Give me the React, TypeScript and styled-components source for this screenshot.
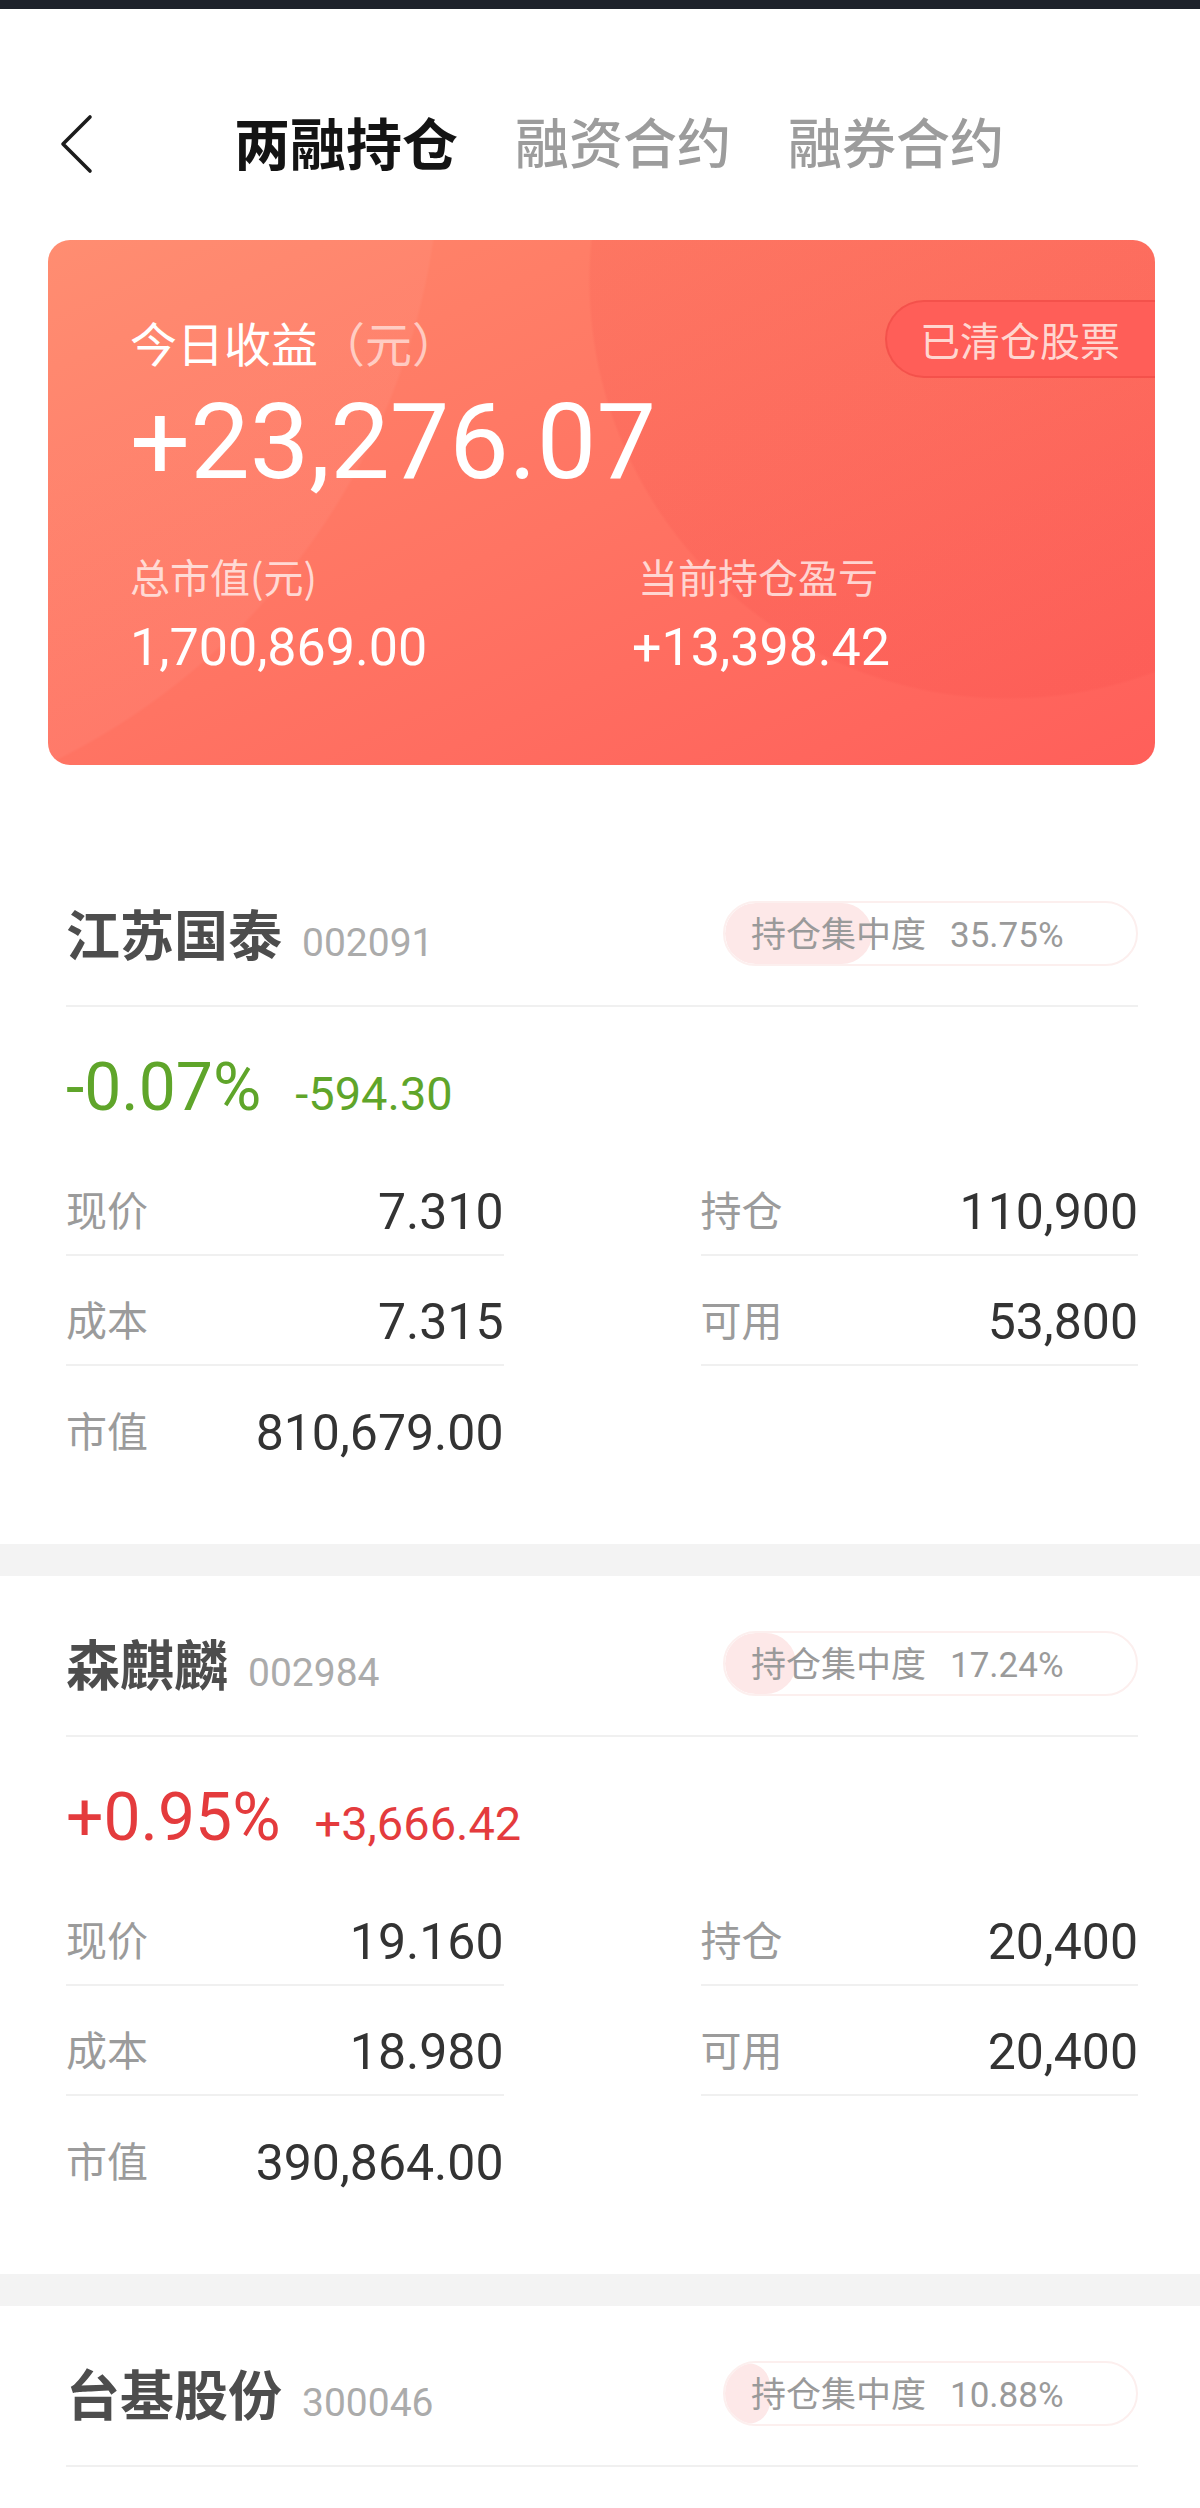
import styled, { createGlobalStyle } from "styled-components";

const NUM_FONT = `Roboto, "Noto Sans CJK SC", sans-serif`

const GlobalStyle = createGlobalStyle`
    html, body {
        margin: 0;
        padding: 0;
        background: #ffffff;
    }
    body {
        font-family: "Noto Sans CJK SC", "Noto Sans", sans-serif;
    }
    * {
        box-sizing: border-box;
    }
`

const Page = styled.div`
    width: 1200px;
    min-height: 2508px;
    background: #ffffff;
`

const StatusBar = styled.div`
    height: 9px;
    background: #1e222b;
`

const TopArea = styled.header`
    padding: 72px 0 39px;
`

const NavBar = styled.nav`
    height: 120px;
    display: flex;
    align-items: center;
    padding-left: 58px;
`

const BackButton = styled.button`
    width: 40px;
    height: 64px;
    margin-top: 6px;
    padding: 0;
    border: 0;
    background: none;
    display: flex;
    align-items: center;
    justify-content: center;
`

const Tabs = styled.div`
    display: flex;
    align-items: center;
    gap: 57px;
    margin-left: 136px;
`

const Tab = styled.div<{ $active?: boolean }>`
    font-size: ${props => props.$active ? "56px" : "54px"};
    line-height: 64px;
    font-weight: ${props => props.$active ? 700 : 500};
    color: ${props => props.$active ? "#141414" : "#9c9c9c"};
`

const SummaryCard = styled.section`
    height: 525px;
    margin: 0 45px 0 48px;
    padding: 60px 0 0 82px;
    border-radius: 22px;
    overflow: hidden;
    color: #ffffff;
    background:
        radial-gradient(circle 420px at 960px 40px, rgba(240, 60, 60, 0.12) 417px, transparent 420px),
        radial-gradient(circle 694px at -300px -100px, rgba(255, 255, 255, 0.045) 691px, transparent 694px),
        linear-gradient(155deg, #ff886b 0%, #ff7463 50%, #ff5f5a 100%);
`

const CardTop = styled.div`
    height: 78px;
    display: flex;
    align-items: center;
    justify-content: space-between;
`

const TodayLabel = styled.div`
    margin-top: 6px;
    font-size: 47px;
    line-height: 56px;
`

const Unit = styled.span`
    color: rgba(255, 255, 255, 0.6);
`

const ClearedButton = styled.button`
    height: 78px;
    padding: 0 35px 0 33px;
    border: 2px solid rgba(222, 58, 54, 0.35);
    border-right: 0;
    border-radius: 39px 0 0 39px;
    background: #ff5e58;
    color: rgba(255, 222, 216, 0.95);
    font-family: inherit;
    font-size: 40px;
    line-height: 56px;
`

const BigNumber = styled.div`
    margin-top: 8px;
    font-family: ${NUM_FONT};
    font-size: 106px;
    line-height: 112px;
`

const Stats = styled.div`
    margin-top: 50px;
    display: grid;
    grid-template-columns: 502px 1fr;
`

const StatLabel = styled.div<{ $indent?: boolean }>`
    padding-left: ${props => props.$indent ? "6px" : "0"};
    font-size: 40px;
    line-height: 56px;
    color: rgba(255, 255, 255, 0.72);
`

const StatValue = styled.div`
    margin-top: 14px;
    font-family: ${NUM_FONT};
    font-size: 52px;
    line-height: 60px;
`

const StockBlock = styled.section<{ $first?: boolean }>`
    margin-top: ${props => props.$first ? "81px" : "0"};
    padding: 55px 62px 68px 66px;
`

const StockHeader = styled.div`
    display: flex;
    align-items: center;
    justify-content: space-between;
    padding-bottom: 39px;
    border-bottom: 2px solid #f0f0f0;
`

const NameGroup = styled.div`
    display: flex;
    align-items: baseline;
`

const StockName = styled.span`
    font-size: 54px;
    line-height: 64px;
    font-weight: 700;
    color: #4d4d4d;
`

const StockCode = styled.span`
    margin-left: 20px;
    font-family: ${NUM_FONT};
    font-size: 39px;
    color: #ababab;
`

const Concentration = styled.div`
    position: relative;
    width: 415px;
    height: 65px;
    display: flex;
    align-items: center;
    padding-left: 26px;
    border: 2px solid #fcefee;
    border-radius: 33px;
    overflow: hidden;
    font-size: 35px;
    color: #9a9a9a;
`

const ConcentrationFill = styled.span`
    position: absolute;
    left: 0;
    top: 0;
    bottom: 0;
    border-radius: 33px;
    background: #fde8e8;
`

const ConcentrationText = styled.span`
    position: relative;
    line-height: 48px;
`

const ConcentrationValue = styled.span`
    margin-left: 24px;
    font-family: ${NUM_FONT};
`

const ChangeRow = styled.div<{ $up: boolean }>`
    height: 139px;
    padding-top: 50px;
    display: flex;
    align-items: baseline;
    font-family: ${NUM_FONT};
    color: ${props => props.$up ? "#e43b3d" : "#5fa52a"};
`

const ChangePct = styled.span`
    font-size: 66px;
    line-height: 62px;
`

const ChangeAmt = styled.span`
    margin-left: 34px;
    font-size: 47px;
`

const InfoGrid = styled.div`
    display: grid;
    grid-template-columns: 1fr 1fr;
    column-gap: 197px;
`

const InfoCell = styled.div<{ $last?: boolean }>`
    height: 110px;
    padding-top: 14px;
    display: flex;
    align-items: center;
    justify-content: space-between;
    border-bottom: ${props => props.$last ? "none" : "2px solid #f0f0f0"};
`

const InfoLabel = styled.span`
    padding-top: 1px;
    font-size: 41px;
    line-height: 60px;
    color: #9b9b9b;
`

const InfoValue = styled.span`
    padding-top: 10px;
    font-family: ${NUM_FONT};
    font-size: 50px;
    line-height: 60px;
    color: #333333;
`

const Band = styled.div`
    height: 32px;
    background: #f3f3f3;
`

type Stock = {
    name: string
    code: string
    ratio: number
    detail?: {
        pct: string
        amt: string
        up: boolean
        price: string
        hold: string
        cost: string
        avail: string
        value: string
    }
}

const STOCKS: Stock[] = [
    {
        name: "江苏国泰", code: "002091", ratio: 35.75,
        detail: { pct: "-0.07%", amt: "-594.30", up: false, price: "7.310", hold: "110,900", cost: "7.315", avail: "53,800", value: "810,679.00" }
    },
    {
        name: "森麒麟", code: "002984", ratio: 17.24,
        detail: { pct: "+0.95%", amt: "+3,666.42", up: true, price: "19.160", hold: "20,400", cost: "18.980", avail: "20,400", value: "390,864.00" }
    },
    { name: "台基股份", code: "300046", ratio: 10.88 },
]

const BackIcon = () => (
    <svg width="40" height="64" viewBox="0 0 40 64" fill="none">
        <path d="M32 5 L5 32 L32 59" stroke="#1c1c1c" strokeWidth="3.6" strokeLinecap="round" strokeLinejoin="round" />
    </svg>
)

const StockSection = ({ stock, first }: { stock: Stock, first: boolean }) => {
    const d = stock.detail
    return (
        <StockBlock $first={first}>
            <StockHeader>
                <NameGroup>
                    <StockName>{stock.name}</StockName>
                    <StockCode>{stock.code}</StockCode>
                </NameGroup>
                <Concentration>
                    <ConcentrationFill style={{ width: `${stock.ratio}%` }} />
                    <ConcentrationText>
                        持仓集中度<ConcentrationValue>{stock.ratio.toFixed(2)}%</ConcentrationValue>
                    </ConcentrationText>
                </Concentration>
            </StockHeader>
            {d && <>
                <ChangeRow $up={d.up}>
                    <ChangePct>{d.pct}</ChangePct>
                    <ChangeAmt>{d.amt}</ChangeAmt>
                </ChangeRow>
                <InfoGrid>
                    <InfoCell><InfoLabel>现价</InfoLabel><InfoValue>{d.price}</InfoValue></InfoCell>
                    <InfoCell><InfoLabel>持仓</InfoLabel><InfoValue>{d.hold}</InfoValue></InfoCell>
                    <InfoCell><InfoLabel>成本</InfoLabel><InfoValue>{d.cost}</InfoValue></InfoCell>
                    <InfoCell><InfoLabel>可用</InfoLabel><InfoValue>{d.avail}</InfoValue></InfoCell>
                    <InfoCell $last><InfoLabel>市值</InfoLabel><InfoValue>{d.value}</InfoValue></InfoCell>
                </InfoGrid>
            </>}
        </StockBlock>
    )
}

export default function App() {
    return (
        <Page>
            <GlobalStyle />
            <StatusBar />
            <TopArea>
                <NavBar>
                    <BackButton><BackIcon /></BackButton>
                    <Tabs>
                        <Tab $active>两融持仓</Tab>
                        <Tab>融资合约</Tab>
                        <Tab>融券合约</Tab>
                    </Tabs>
                </NavBar>
            </TopArea>

            <SummaryCard>
                <CardTop>
                    <TodayLabel>今日收益<Unit>（元）</Unit></TodayLabel>
                    <ClearedButton>已清仓股票</ClearedButton>
                </CardTop>
                <BigNumber>+23,276.07</BigNumber>
                <Stats>
                    <div>
                        <StatLabel>总市值(元)</StatLabel>
                        <StatValue>1,700,869.00</StatValue>
                    </div>
                    <div>
                        <StatLabel $indent>当前持仓盈亏</StatLabel>
                        <StatValue>+13,398.42</StatValue>
                    </div>
                </Stats>
            </SummaryCard>

            {STOCKS.map((stock, i) => (
                <div key={stock.code}>
                    {i > 0 && <Band />}
                    <StockSection stock={stock} first={i === 0} />
                </div>
            ))}
        </Page>
    )
}
